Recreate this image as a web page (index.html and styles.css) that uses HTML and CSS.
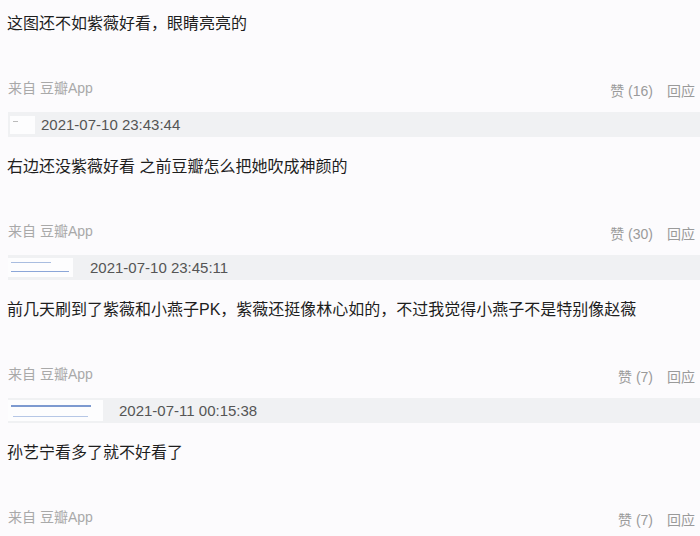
FILE: index.html
```html
<!DOCTYPE html>
<html lang="zh-CN">
<head>
<meta charset="utf-8">
<title>评论</title>
<link rel="stylesheet" href="styles.css">
</head>
<body>
<div class="list">
  <div class="comment first">
    <p class="text">这图还不如紫薇好看，眼睛亮亮的</p>
    <div class="meta">
      <span class="from">来自 豆瓣App</span>
      <span class="actions"><span class="like">赞 (16)</span><span class="reply">回应</span></span>
    </div>
  </div>
  <div class="comment">
    <div class="bar">
      <span class="user user-a"><span class="mask mask-a"><i class="scrib s1"></i></span></span>
      <span class="time">2021-07-10 23:43:44</span>
    </div>
    <p class="text">右边还没紫薇好看 之前豆瓣怎么把她吹成神颜的</p>
    <div class="meta">
      <span class="from">来自 豆瓣App</span>
      <span class="actions"><span class="like">赞 (30)</span><span class="reply">回应</span></span>
    </div>
  </div>
  <div class="comment">
    <div class="bar">
      <span class="user user-b"><span class="mask mask-b"><i class="scrib s2"></i><i class="scrib s3"></i></span></span>
      <span class="time">2021-07-10 23:45:11</span>
    </div>
    <p class="text">前几天刷到了紫薇和小燕子PK，紫薇还挺像林心如的，不过我觉得小燕子不是特别像赵薇</p>
    <div class="meta">
      <span class="from">来自 豆瓣App</span>
      <span class="actions"><span class="like">赞 (7)</span><span class="reply">回应</span></span>
    </div>
  </div>
  <div class="comment">
    <div class="bar">
      <span class="user user-c"><span class="mask mask-c"><i class="scrib s4"></i><i class="scrib s5"></i></span></span>
      <span class="time">2021-07-11 00:15:38</span>
    </div>
    <p class="text">孙艺宁看多了就不好看了</p>
    <div class="meta">
      <span class="from">来自 豆瓣App</span>
      <span class="actions"><span class="like">赞 (7)</span><span class="reply">回应</span></span>
    </div>
  </div>
</div>
</body>
</html>
```
FILE: styles.css
```css
html, body {
  margin: 0;
  padding: 0;
  background: #fcfbfd;
}
body {
  font-family: "Liberation Sans", "Noto Sans CJK SC", sans-serif;
  color: #222;
  width: 700px;
  height: 536px;
  overflow: hidden;
}
.list {
  display: flex;
  flex-direction: column;
  padding-top: 12px;
}
.comment {
  display: flex;
  flex-direction: column;
}
.bar {
  margin: 9px 0 18px 8px;
  height: 25px;
  background: #f0f1f3;
  display: flex;
  align-items: center;
}
.text {
  margin: 0 0 40px 7px;
  font-size: 16px;
  line-height: 24px;
  color: #1e1e1e;
  white-space: nowrap;
}
.meta {
  display: flex;
  justify-content: space-between;
  align-items: flex-start;
  padding-left: 8px;
  padding-right: 5px;
  height: 27px;
}
.from {
  font-size: 14px;
  line-height: 24px;
  color: #a9a9a9;
}
.actions {
  display: flex;
  gap: 14px;
  padding-top: 3px;
  font-size: 14px;
  line-height: 24px;
  color: #9a9a9a;
}
.user {
  display: flex;
  align-items: center;
  height: 25px;
}
.user-a { width: 31px; padding-left: 2px; }
.user-b { width: 82px; }
.user-c { width: 111px; }
.mask {
  position: relative;
  display: block;
  background: #fdfdfe;
}
.mask-a { width: 25px; height: 18px; }
.mask-b { width: 65px; height: 19px; }
.mask-c { width: 95px; height: 21px; }
.scrib {
  position: absolute;
  display: block;
  height: 1px;
  background: #8fa9d6;
}
.s1 { left: 3px; top: 5px; width: 5px; background: #bbb; }
.s2 { left: 3px; top: 4px; width: 40px; background: #a9bde0; }
.s3 { left: 3px; top: 13px; width: 58px; background: #8ba6d8; }
.s4 { left: 3px; top: 5px; width: 80px; height: 2px; background: #7d9ad0; }
.s5 { left: 5px; top: 16px; width: 75px; background: #b6c7e6; }
.time {
  font-size: 15px;
  color: #555;
  line-height: 25px;
}
```
